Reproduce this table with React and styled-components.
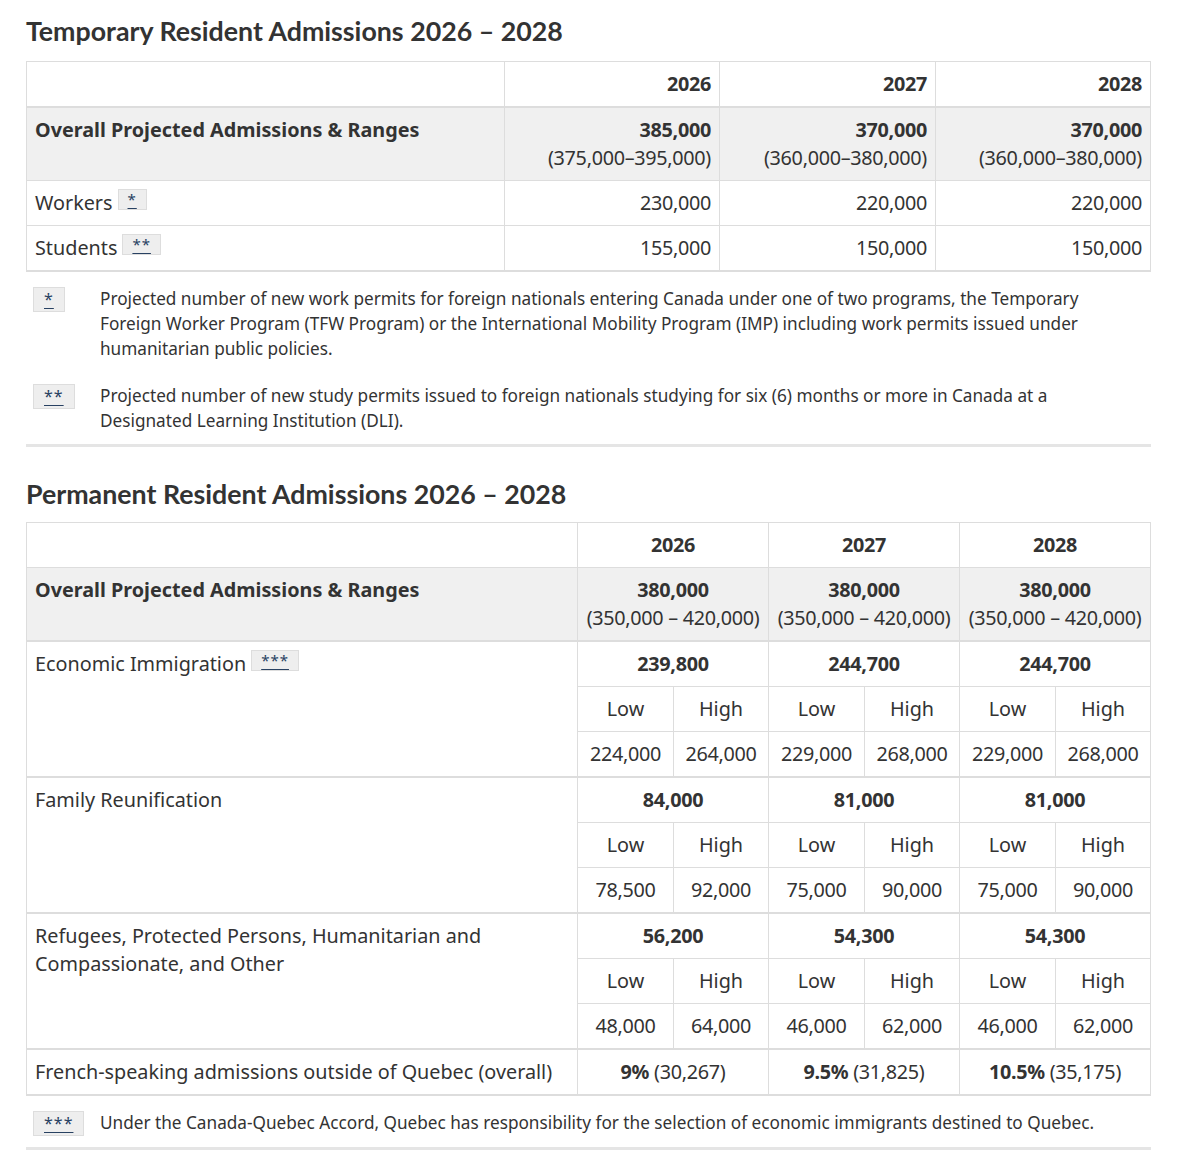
import React from "react";
import styled, { createGlobalStyle, css } from "styled-components";

const Global = createGlobalStyle`
  html, body { margin: 0; padding: 0; background: #fff; }
  body { font-family: "Noto Sans", "DejaVu Sans", sans-serif; color: #333; font-size: 20px; }
  * { box-sizing: border-box; }
`;

const Page = styled.main`
  width: 1151px;
  padding: 15px 0 0 26px;
`;

const Heading = styled.h2`
  font-family: Lato, "Liberation Sans", sans-serif;
  font-weight: 700;
  font-size: 26.75px;
  line-height: 32px;
  color: #333;
  margin: 0 0 ${(p) => (p.$tight ? "12px" : "14px")};
`;

const Table = styled.table`
  width: 1125px;
  border-collapse: collapse;
  table-layout: fixed;
  font-size: 19.8px;
  line-height: 28px;
  border: 1px solid #ddd;
  border-bottom: 2px solid #ddd;
`;

const Cell = styled.td`
  padding: 8px;
  border: 1px solid #ddd;
  vertical-align: top;
  text-align: ${(p) => p.$align || "left"};
  font-weight: ${(p) => (p.$bold ? 700 : 400)};
  ${(p) => p.$num && css`letter-spacing: -0.3px;`}
  ${(p) => p.$shade && css`background: #f0f0f0;`}
  ${(p) => p.$thickTop && css`border-top: 2px solid #ddd;`}
`;

const Range = styled.span`
  font-weight: 400;
  display: block;
  white-space: nowrap;
`;

const FnRef = styled.a`
  display: inline-block;
  background: #eee;
  border: 1px solid #ddd;
  color: #284162;
  font-size: 15px;
  line-height: 17px;
  padding: 1px 9px 1px;
  margin-left: 5px;
  vertical-align: top;
  text-decoration: underline;
  text-underline-offset: 3px;
  letter-spacing: 1px;
`;

const Notes = styled.aside`
  display: flex;
  flex-direction: column;
  gap: 22px;
  padding: 14px 0 11px;
  border-bottom: 3px solid #e5e5e5;
  width: 1125px;
  margin-bottom: ${(p) => (p.$last ? 0 : "31px")};
`;

const Note = styled.div`
  display: grid;
  grid-template-columns: 74px 1fr;
  font-size: 17.2px;
  line-height: 25px;
  padding-right: 20px;
`;

const NoteLabel = styled.div`
  padding-left: 7px;
`;

const NoteBox = styled.a`
  display: inline-block;
  background: #eee;
  border: 1px solid #ddd;
  color: #284162;
  font-size: 16px;
  line-height: 23px;
  padding: 0 10px;
  text-decoration: underline;
  text-underline-offset: 3px;
  letter-spacing: 1px;
`;

const NoteText = styled.p`
  margin: 0;
`;

const Pct = styled.b`
  font-weight: 700;
`;

const years = ["2026", "2027", "2028"];

function TemporaryTable() {
  return (
    <Table>
      <colgroup>
        <col style={{ width: 478 }} />
        <col style={{ width: 215 }} />
        <col style={{ width: 216 }} />
        <col style={{ width: 215 }} />
      </colgroup>
      <thead>
        <tr>
          <Cell as="th" />
          {years.map((y) => (
            <Cell as="th" key={y} $align="right" $bold $num>
              {y}
            </Cell>
          ))}
        </tr>
      </thead>
      <tbody>
        <tr>
          <Cell as="th" $bold $shade $thickTop>Overall Projected Admissions &amp; Ranges</Cell>
          {[
            ["385,000", "(375,000–395,000)"],
            ["370,000", "(360,000–380,000)"],
            ["370,000", "(360,000–380,000)"],
          ].map(([a, b], i) => (
            <Cell key={i} $align="right" $bold $shade $thickTop $num>
              {a}
              <Range>{b}</Range>
            </Cell>
          ))}
        </tr>
        <tr>
          <Cell>
            Workers<FnRef>*</FnRef>
          </Cell>
          <Cell $align="right" $num>230,000</Cell>
          <Cell $align="right" $num>220,000</Cell>
          <Cell $align="right" $num>220,000</Cell>
        </tr>
        <tr>
          <Cell>
            Students<FnRef>**</FnRef>
          </Cell>
          <Cell $align="right" $num>155,000</Cell>
          <Cell $align="right" $num>150,000</Cell>
          <Cell $align="right" $num>150,000</Cell>
        </tr>
      </tbody>
    </Table>
  );
}

const groups = [
  {
    label: "Economic Immigration",
    fn: "***",
    totals: ["239,800", "244,700", "244,700"],
    values: ["224,000", "264,000", "229,000", "268,000", "229,000", "268,000"],
  },
  {
    label: "Family Reunification",
    totals: ["84,000", "81,000", "81,000"],
    values: ["78,500", "92,000", "75,000", "90,000", "75,000", "90,000"],
  },
  {
    label: "Refugees, Protected Persons, Humanitarian and Compassionate, and Other",
    totals: ["56,200", "54,300", "54,300"],
    values: ["48,000", "64,000", "46,000", "62,000", "46,000", "62,000"],
  },
];

function PermanentTable() {
  return (
    <Table>
      <colgroup>
        <col style={{ width: 551 }} />
        {Array.from({ length: 6 }).map((_, i) => (
          <col key={i} style={{ width: i % 2 === 0 ? 96 : 95 }} />
        ))}
      </colgroup>
      <thead>
        <tr>
          <Cell as="th" />
          {years.map((y) => (
            <Cell as="th" key={y} colSpan={2} $align="center" $bold $num>
              {y}
            </Cell>
          ))}
        </tr>
      </thead>
      <tbody>
        <tr>
          <Cell as="th" $bold $shade>Overall Projected Admissions &amp; Ranges</Cell>
          {years.map((y) => (
            <Cell key={y} colSpan={2} $align="center" $bold $shade $num>
              380,000
              <Range>(350,000 – 420,000)</Range>
            </Cell>
          ))}
        </tr>
        {groups.map((g) => (
          <React.Fragment key={g.label}>
            <tr>
              <Cell rowSpan={3} $thickTop>
                {g.label}
                {g.fn && <FnRef>{g.fn}</FnRef>}
              </Cell>
              {g.totals.map((t, i) => (
                <Cell key={i} colSpan={2} $align="center" $bold $thickTop $num>
                  {t}
                </Cell>
              ))}
            </tr>
            <tr>
              {years.flatMap((y) => [
                <Cell key={y + "l"} $align="center">Low</Cell>,
                <Cell key={y + "h"} $align="center">High</Cell>,
              ])}
            </tr>
            <tr>
              {g.values.map((v, i) => (
                <Cell key={i} $align="center" $num>{v}</Cell>
              ))}
            </tr>
          </React.Fragment>
        ))}
        <tr>
          <Cell $thickTop>French-speaking admissions outside of Quebec (overall)</Cell>
          {[
            ["9%", "(30,267)"],
            ["9.5%", "(31,825)"],
            ["10.5%", "(35,175)"],
          ].map(([p, n]) => (
            <Cell key={p} colSpan={2} $align="center" $thickTop $num>
              <Pct>{p}</Pct> {n}
            </Cell>
          ))}
        </tr>
      </tbody>
    </Table>
  );
}

export default function App() {
  return (
    <>
      <Global />
      <Page>
        <Heading>Temporary Resident Admissions 2026 – 2028</Heading>
        <TemporaryTable />
        <Notes>
          <Note>
            <NoteLabel>
              <NoteBox>*</NoteBox>
            </NoteLabel>
            <NoteText>
              Projected number of new work permits for foreign nationals entering Canada under one of two programs, the
              Temporary Foreign Worker Program (TFW Program) or the International Mobility Program (IMP) including work
              permits issued under humanitarian public policies.
            </NoteText>
          </Note>
          <Note>
            <NoteLabel>
              <NoteBox>**</NoteBox>
            </NoteLabel>
            <NoteText>
              Projected number of new study permits issued to foreign nationals studying for six (6) months or more in
              Canada at a Designated Learning Institution (DLI).
            </NoteText>
          </Note>
        </Notes>
        <Heading $tight>Permanent Resident Admissions 2026 – 2028</Heading>
        <PermanentTable />
        <Notes $last>
          <Note>
            <NoteLabel>
              <NoteBox>***</NoteBox>
            </NoteLabel>
            <NoteText>
              Under the Canada-Quebec Accord, Quebec has responsibility for the selection of economic immigrants destined
              to Quebec.
            </NoteText>
          </Note>
        </Notes>
      </Page>
    </>
  );
}
